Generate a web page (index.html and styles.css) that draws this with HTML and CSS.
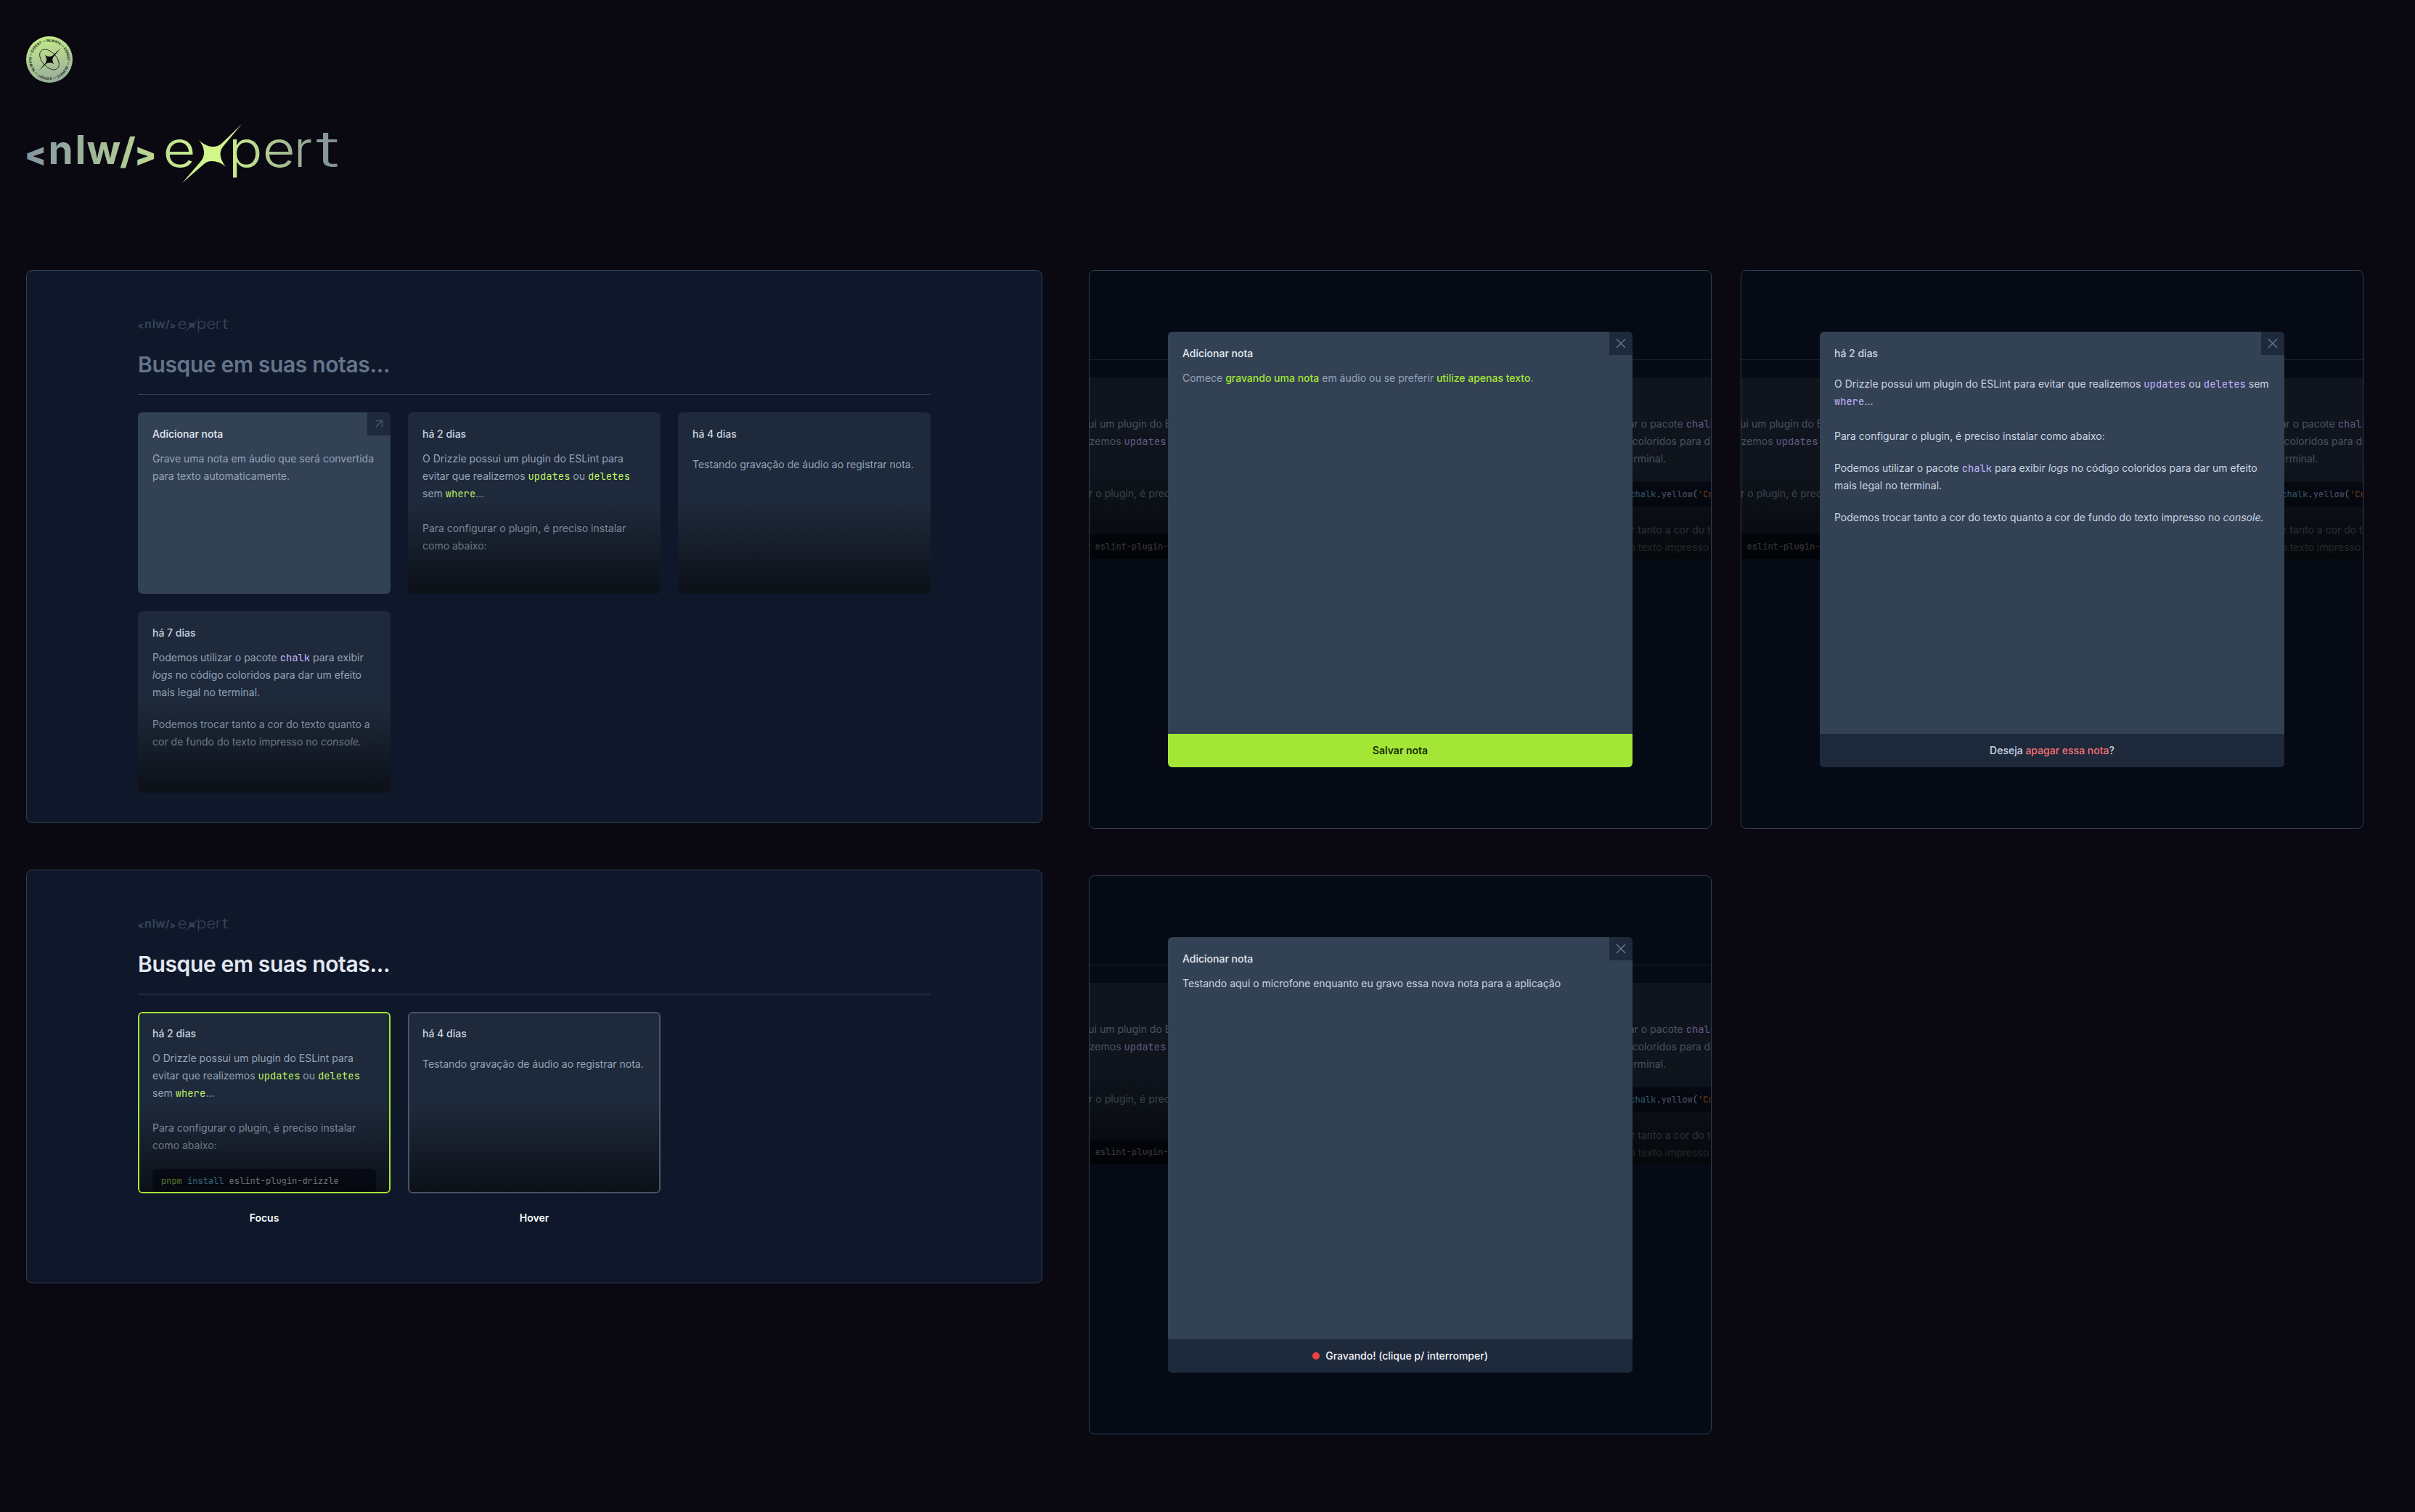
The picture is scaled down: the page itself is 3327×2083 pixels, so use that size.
FILE: index.html
```html
<!DOCTYPE html>
<html lang="pt-BR">
<head>
<meta charset="utf-8">
<title>NLW Expert – Notas</title>
<link rel="stylesheet" href="styles.css">
</head>
<body>
<svg class="defs" width="0" height="0" aria-hidden="true">
  <defs>
    <linearGradient id="brand" gradientUnits="userSpaceOnUse" x1="0" y1="40" x2="431" y2="40">
      <stop offset="0" stop-color="#8494a1"/>
      <stop offset=".59" stop-color="#d2f78b"/>
      <stop offset=".62" stop-color="#d2f78b"/>
      <stop offset="1" stop-color="#7d8b99"/>
    </linearGradient>
    <symbol id="logo" viewBox="0 0 431 83">
      <g class="logo-code">
        <text class="logo-bracket" x="-2" y="58">&lt;</text>
        <text x="30.500 67.500 83.500" y="55.700" font-size="55">nlw</text>
        <text x="129" y="56" font-size="50" textLength="22" lengthAdjust="spacingAndGlyphs">/</text>
        <text class="logo-bracket" x="149.500" y="58">&gt;</text>
      </g>
      <g class="logo-word" font-size="70">
        <text x="188.300" y="59.700" textLength="45.300" lengthAdjust="spacingAndGlyphs">e</text>
        <text x="278.500" y="59.700" textLength="47.200" lengthAdjust="spacingAndGlyphs">p</text>
        <text x="325.600" y="59.700" textLength="45.300" lengthAdjust="spacingAndGlyphs">e</text>
        <text x="369" y="59.700">r</text>
        <text x="399.500" y="59.700" textLength="32" lengthAdjust="spacingAndGlyphs">t</text>
      </g>
      <path d="M238 23C247 32 262 36 270 27L297 1L272 31C264 40 268 50 275 60C267 52 252 49 245 56L215 82L240 53C248 44 246 33 238 23Z"/>
    </symbol>
  </defs>
</svg>

<header class="brand">
  <svg class="badge" viewBox="0 0 64 64" role="img" aria-label="NLW#14 Expert">
    <defs>
      <linearGradient id="badge-fill" x1=".4" y1="0" x2=".6" y2="1">
        <stop offset="0" stop-color="#c6ec88"/>
        <stop offset="1" stop-color="#97aa9e"/>
      </linearGradient>
      <path id="ring" d="M32 56.500A24.500 24.500 0 1 1 32.010 56.500"/>
    </defs>
    <circle cx="32" cy="32" r="32" fill="url(#badge-fill)"/>
    <text class="badge-text" transform="rotate(-7 32 32)"><textPath href="#ring" textLength="152">EXPERT — NLW#14 — EXPERT — NLW#14 — EXPERT — NLW#14 — </textPath></text>
    <ellipse cx="32" cy="32" rx="16.500" ry="10" transform="rotate(48 32 32)" fill="none" stroke="#10140f" stroke-width=".8"/>
    <path d="M25.500 25.500C28 28 33 28.500 36 27L48 16L37.500 28.500C35.500 31.500 36 35 38.500 38.500C35.500 36 31 36 28 37.500L16 48.500L27 36.500C29 33 28 28.500 25.500 25.500Z" fill="#0a0a10"/>
  </svg>
  <svg class="logo"><use href="#logo"/></svg>
</header>

<main class="board">
  <div class="column column-home">
    <section class="screen screen-home">
      <svg class="logo-small"><use href="#logo"/></svg>
      <h1 class="search">Busque em suas notas...</h1>
      <div class="notes">
        <article class="card card-add">
          <span class="corner"><svg viewBox="0 0 32 32"><path d="M11.500 11.500H20.500V20.500M20.500 11.500L11.500 20.500"/></svg></span>
          <h2>Adicionar nota</h2>
          <p>Grave uma nota em áudio que será convertida para texto automaticamente.</p>
        </article>
        <article class="card">
          <h2>há 2 dias</h2>
          <p>O Drizzle possui um plugin do ESLint para evitar que realizemos <code>updates</code> ou <code>deletes</code> sem <code>where</code>...<br><br>Para configurar o plugin, é preciso instalar como abaixo:</p>
        </article>
        <article class="card card-roomy">
          <h2>há 4 dias</h2>
          <p>Testando gravação de áudio ao registrar nota.</p>
        </article>
        <article class="card card-violet">
          <h2>há 7 dias</h2>
          <p>Podemos utilizar o pacote <code>chalk</code> para exibir <em>logs</em> no código coloridos para dar um efeito mais legal no terminal.</p>
          <p>Podemos trocar tanto a cor do texto quanto a cor de fundo do texto impresso no <em>console.</em></p>
        </article>
      </div>
    </section>

    <section class="screen screen-states">
      <svg class="logo-small"><use href="#logo"/></svg>
      <h1 class="search search-filled">Busque em suas notas...</h1>
      <div class="notes">
        <figure class="state">
          <article class="card card-focus">
            <h2>há 2 dias</h2>
            <p>O Drizzle possui um plugin do ESLint para evitar que realizemos <code>updates</code> ou <code>deletes</code> sem <code>where</code>...<br><br>Para configurar o plugin, é preciso instalar como abaixo:</p>
            <pre class="snippet"><span class="tk-cmd">pnpm</span> <span class="tk-obj">install</span> eslint-plugin-drizzle</pre>
          </article>
          <figcaption>Focus</figcaption>
        </figure>
        <figure class="state">
          <article class="card card-roomy card-hover">
            <h2>há 4 dias</h2>
            <p>Testando gravação de áudio ao registrar nota.</p>
          </article>
          <figcaption>Hover</figcaption>
        </figure>
      </div>
    </section>
  </div>

  <div class="column column-modals">
    <section class="screen screen-modal">
      <div class="backdrop">
        <div class="notes notes-behind">
          <article class="card card-violet">
            <h2>há 2 dias</h2>
            <p>O Drizzle possui um plugin do ESLint para evitar que realizemos <code>updates</code><br><br><br>Para configurar o plugin, é preciso</p>
            <pre class="snippet snippet-low"><span class="tk-cmd">pnpm</span> <span class="tk-obj">install</span> eslint-plugin-drizzle</pre>
          </article>
          <div></div>
          <article class="card card-violet">
            <h2>há 7 dias</h2>
            <p>Podemos utilizar o pacote <code>chalk</code> para exibir <em>logs</em> no código coloridos para dar um efeito mais legal no terminal.</p>
            <pre class="snippet">console.log(<span class="tk-obj">chalk</span>.<span class="tk-fn">yellow</span>(<span class="tk-str">'Cr</span></pre>
            <p>Podemos trocar tanto a cor do texto quanto a cor de fundo do texto impresso no <em>console.</em></p>
          </article>
        </div>
      </div>
      <div class="modal">
        <span class="corner corner-close"><svg viewBox="0 0 32 32"><path d="M10 10L22 22M22 10L10 22"/></svg></span>
        <div class="modal-body">
          <h2>Adicionar nota</h2>
          <p class="hint">Comece <strong>gravando uma nota</strong> em áudio ou se preferir <strong>utilize apenas texto</strong>.</p>
        </div>
        <div class="modal-action action-save">Salvar nota</div>
      </div>
    </section>

    <section class="screen screen-modal">
      <div class="backdrop">
        <div class="notes notes-behind">
          <article class="card card-violet">
            <h2>há 2 dias</h2>
            <p>O Drizzle possui um plugin do ESLint para evitar que realizemos <code>updates</code><br><br><br>Para configurar o plugin, é preciso</p>
            <pre class="snippet snippet-low"><span class="tk-cmd">pnpm</span> <span class="tk-obj">install</span> eslint-plugin-drizzle</pre>
          </article>
          <div></div>
          <article class="card card-violet">
            <h2>há 7 dias</h2>
            <p>Podemos utilizar o pacote <code>chalk</code> para exibir <em>logs</em> no código coloridos para dar um efeito mais legal no terminal.</p>
            <pre class="snippet">console.log(<span class="tk-obj">chalk</span>.<span class="tk-fn">yellow</span>(<span class="tk-str">'Cr</span></pre>
            <p>Podemos trocar tanto a cor do texto quanto a cor de fundo do texto impresso no <em>console.</em></p>
          </article>
        </div>
      </div>
      <div class="modal">
        <span class="corner corner-close"><svg viewBox="0 0 32 32"><path d="M10 10L22 22M22 10L10 22"/></svg></span>
        <div class="modal-body">
          <h2>Adicionar nota</h2>
          <p>Testando aqui o microfone enquanto eu gravo essa nova nota para a aplicação</p>
        </div>
        <div class="modal-action action-record"><span class="dot"></span>Gravando! (clique p/ interromper)</div>
      </div>
    </section>
  </div>

  <div class="column column-modals">
    <section class="screen screen-modal">
      <div class="backdrop">
        <div class="notes notes-behind">
          <article class="card card-violet">
            <h2>há 2 dias</h2>
            <p>O Drizzle possui um plugin do ESLint para evitar que realizemos <code>updates</code><br><br><br>Para configurar o plugin, é preciso</p>
            <pre class="snippet snippet-low"><span class="tk-cmd">pnpm</span> <span class="tk-obj">install</span> eslint-plugin-drizzle</pre>
          </article>
          <div></div>
          <article class="card card-violet">
            <h2>há 7 dias</h2>
            <p>Podemos utilizar o pacote <code>chalk</code> para exibir <em>logs</em> no código coloridos para dar um efeito mais legal no terminal.</p>
            <pre class="snippet">console.log(<span class="tk-obj">chalk</span>.<span class="tk-fn">yellow</span>(<span class="tk-str">'Cr</span></pre>
            <p>Podemos trocar tanto a cor do texto quanto a cor de fundo do texto impresso no <em>console.</em></p>
          </article>
        </div>
      </div>
      <div class="modal">
        <span class="corner corner-close"><svg viewBox="0 0 32 32"><path d="M10 10L22 22M22 10L10 22"/></svg></span>
        <div class="modal-body modal-note">
          <h2>há 2 dias</h2>
          <p>O Drizzle possui um plugin do ESLint para evitar que realizemos <code>updates</code> ou <code>deletes</code> sem <code>where</code>...<br><br>Para configurar o plugin, é preciso instalar como abaixo:</p>
          <p>Podemos utilizar o pacote <code>chalk</code> para exibir <em>logs</em> no código coloridos para dar um efeito mais legal no terminal.</p>
          <p>Podemos trocar tanto a cor do texto quanto a cor de fundo do texto impresso no <em>console.</em></p>
        </div>
        <div class="modal-action action-delete">Deseja&nbsp;<span class="danger">apagar essa nota</span>?</div>
      </div>
    </section>
  </div>
</main>
</body>
</html>
```

FILE: styles.css
```css
*, *::before, *::after { box-sizing: border-box; }

body {
  margin: 0;
  padding: 50px 36px 0;
  width: 3327px;
  height: 2083px;
  overflow: hidden;
  background: #0a0811;
  color: #cbd5e1;
  font-family: Inter, "Liberation Sans", sans-serif;
  font-size: 14px;
  line-height: 24px;
}

h1, h2, p, pre, figure { margin: 0; }
.defs { position: absolute; }

/* Brand */
.brand { display: flex; flex-direction: column; gap: 56px; height: 322px; }
.badge { width: 64px; height: 64px; display: block; }
.badge-text { font-size: 5px; font-weight: 700; fill: #2c3a2c; }
.logo { width: 431px; height: 83px; fill: url(#brand); overflow: visible; }
.logo-code { font-weight: 700; }
.logo-bracket { font-size: 43px; font-weight: 900; }
.logo-word { font-weight: 350; }
.logo-small { display: block; width: 125px; height: 24px; fill: #334155; }

/* Board */
.board { display: flex; align-items: flex-start; }
.column { display: flex; flex-direction: column; gap: 64px; }
.column-home { width: 1400px; margin-right: 64px; }
.column-modals { width: 858px; margin-right: 40px; }

.screen {
  border: 1px solid #334155;
  border-radius: 8px;
  background: #0f172a;
}
.screen-home, .screen-states { padding: 63px 153px 0; }
.screen-home { height: 762px; }
.screen-states { height: 570px; }

.search {
  height: 84px;
  padding-top: 24px;
  border-bottom: 1px solid #334155;
  color: #64748b;
  font-size: 30px;
  font-weight: 600;
  line-height: 36px;
  letter-spacing: -.35px;
}
.search-filled { color: #e2e8f0; }

.notes {
  display: grid;
  grid-template-columns: repeat(3, 348px);
  gap: 24px;
  padding-top: 24px;
}

/* Cards */
.card {
  position: relative;
  display: flex;
  flex-direction: column;
  gap: 20px;
  height: 250px;
  padding: 20px;
  overflow: hidden;
  border-radius: 6px;
  background: #1e293b;
  color: #94a3b8;
}
.card::after {
  content: "";
  position: absolute;
  inset: 50% 0 0;
  background: linear-gradient(rgba(0, 0, 0, 0), rgba(0, 0, 0, .6));
}
.card h2, .modal h2 {
  margin-bottom: -8px;
  font-size: 14px;
  font-weight: 500;
  line-height: 20px;
}
.card h2 { color: #cbd5e1; }
.card-roomy h2, .modal .modal-note h2 { margin-bottom: 0; }
.card-add { background: #334155; }
.card-add::after { content: none; }
.card-add h2 { color: #e2e8f0; }

.card-focus::before, .card-hover::before {
  content: "";
  position: absolute;
  inset: 0;
  z-index: 2;
  border: 2px solid #475569;
  border-radius: 6px;
}
.card-focus::before { border-color: #a3e635; }

.state figcaption {
  padding-top: 22px;
  color: #f8fafc;
  font-weight: 600;
  text-align: center;
}

code, .snippet { font-family: "JetBrains Mono", "DejaVu Sans Mono", monospace; }
code { color: #bef264; font-size: 13.8px; line-height: 1; }
.card-violet code, .modal code { color: #c4b5fd; }

.snippet {
  flex: none;
  height: 34px;
  padding: 0 12px;
  border-radius: 6px;
  background: #0d1426;
  color: #e2e8f0;
  font-size: 12px;
  line-height: 34px;
}
.tk-cmd { color: #bef264; }
.tk-obj { color: #7dd3fc; }
.tk-fn { color: #c4b5fd; }
.tk-str { color: #fb923c; }

/* Corner buttons */
.corner {
  position: absolute;
  top: 0;
  right: 0;
  width: 32px;
  height: 32px;
  background: #1e293b;
}
.corner svg { display: block; fill: none; stroke: #475569; stroke-width: 1.5; }
.corner-close svg { stroke: #64748b; }

/* Modal screens */
.screen-modal {
  display: grid;
  height: 770px;
  overflow: hidden;
  justify-items: center;
  background: #0a1428;
}
.backdrop, .modal { grid-area: 1 / 1; }
.backdrop {
  position: relative;
  width: 856px;
  height: 768px;
  padding-top: 122px;
  overflow: hidden;
}
.backdrop::after {
  content: "";
  position: absolute;
  inset: 0;
  background: rgba(0, 0, 0, .5);
}
.notes-behind {
  width: 1092px;
  margin-left: -118px;
  border-top: 1px solid #334155;
}
.snippet-low { margin-top: 24px; }

.modal {
  position: relative;
  display: flex;
  flex-direction: column;
  width: 640px;
  height: 600px;
  margin-top: 84px;
  overflow: hidden;
  border-radius: 6px;
  background: #334155;
}
.modal-body {
  flex: 1;
  display: flex;
  flex-direction: column;
  gap: 20px;
  padding: 20px 16px 20px 20px;
}
.modal h2 { color: #e2e8f0; }
.modal .modal-note h2 { color: #cbd5e1; }
.hint { color: #94a3b8; }
.hint strong { color: #a3e635; font-weight: 500; }

.modal-action {
  display: flex;
  align-items: center;
  justify-content: center;
  height: 46px;
  background: #1e293b;
  color: #cbd5e1;
  font-weight: 500;
}
.action-save { background: #a3e635; color: #1a2e05; font-weight: 600; }
.action-record { gap: 8px; color: #f1f5f9; }
.dot { width: 10px; height: 10px; border-radius: 50%; background: #ef4444; }
.danger { color: #f87171; }
```
